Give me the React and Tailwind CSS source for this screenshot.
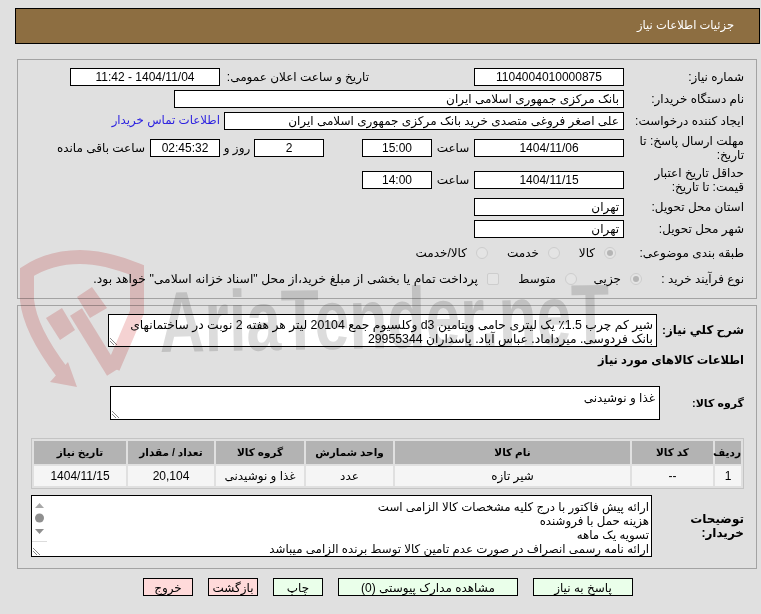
const box = 'h-[18px] border border-black bg-white px-1 flex items-center text-[12px] leading-none shrink-0'

function Field({ className, children }) {
  return <div className={`${box} ${className}`}>{children}</div>
}

function Grip() {
  return (
    <svg className="absolute left-0 bottom-0" width="10" height="10" viewBox="0 0 10 10">
      <path d="M1 2l7 7M1 5l4 4" stroke="#888" strokeWidth="1" fill="none" />
    </svg>
  )
}

function Radio({ checked }) {
  return (
    <span className="w-3 h-3 rounded-full bg-[#e4e4e4] border border-[#cdcdcd] flex items-center justify-center shrink-0">
      {checked && <span className="w-[6px] h-[6px] rounded-full bg-[#b5b5b5]" />}
    </span>
  )
}

function Option({ className, checked, children }) {
  return (
    <div className={`flex items-center gap-[9px] shrink-0 ${className}`}>
      <Radio checked={checked} />
      <span>{children}</span>
    </div>
  )
}

const columns = [
  { title: 'ردیف', value: '1', w: 'w-[26px]' },
  { title: 'کد کالا', value: '--', w: 'w-[81px]' },
  { title: 'نام کالا', value: 'شیر تازه', w: 'w-[235px]' },
  { title: 'واحد شمارش', value: 'عدد', w: 'w-[87px]' },
  { title: 'گروه کالا', value: 'غذا و نوشیدنی', w: 'w-[88px]' },
  { title: 'تعداد / مقدار', value: '20,104', w: 'w-[86px]' },
  { title: 'تاریخ نیاز', value: '1404/11/15', w: 'w-[92px]' },
]

function Watermark() {
  return (
    <svg dir="ltr" className="absolute inset-0 pointer-events-none mix-blend-multiply" width="761" height="614" viewBox="0 0 761 614">
      <g fill="none" stroke="#f5d2d2" strokeWidth="14">
        <path d="M113 368L137 312L137 270Q105 257 80 257Q50 257 27 272L27 300Q30 330 62 372" />
        <path d="M113 372L76 312" />
      </g>
      <g fill="#f5d2d2">
        <polygon points="46,318 62,308 75,330 60,340" />
        <polygon points="77,297 92,287 107,308 90,318" />
        <polygon points="50,382 77,387 68,362" />
      </g>
      <text
        x="160"
        y="352"
        fill="#dcdcdc"
        direction="ltr"
        fontFamily="Liberation Sans, sans-serif"
        fontWeight="700"
        fontSize="86"
        textLength="450"
        lengthAdjust="spacingAndGlyphs"
        transform="rotate(-1 160 352)"
      >
        AriaTender.neT
      </text>
    </svg>
  )
}

export default function App() {
  return (
    <div dir="rtl" className="relative w-[761px] h-[614px] overflow-hidden bg-[#e0e0e0] text-[12px] text-black font-['Liberation_Sans','DejaVu_Sans',sans-serif]">
      {/* Title bar */}
      <div className="mt-2 ml-[15px] mr-px h-[36px] border border-black bg-[#8d6e41] text-white text-[11.5px] flex items-center pr-[25px]">
        جزئیات اطلاعات نیاز
      </div>

      {/* Main info panel */}
      <div className="mt-[15px] ml-[17px] mr-1 h-[240px] border border-[#a3a3a3] pt-2 pr-3">
        <div className="flex items-center">
          <div className="w-[120px] shrink-0">شماره نیاز:</div>
          <Field className="w-[150px] justify-center">1104004010000875</Field>
          <div className="w-[254px] pr-[105px] shrink-0 whitespace-nowrap">تاریخ و ساعت اعلان عمومی:</div>
          <Field className="w-[150px] justify-center">1404/11/04 - 11:42</Field>
        </div>
        <div className="flex items-center mt-1">
          <div className="w-[120px] shrink-0">نام دستگاه خریدار:</div>
          <Field className="w-[450px]">بانک مرکزی جمهوری اسلامی ایران</Field>
        </div>
        <div className="flex items-center mt-1">
          <div className="w-[120px] shrink-0">ایجاد کننده درخواست:</div>
          <Field className="w-[400px]">علی اصغر فروغی متصدی خرید بانک مرکزی جمهوری اسلامی ایران</Field>
          <a className="mr-1 text-[#2a1fe0] text-[11.8px]" href="#">اطلاعات تماس خریدار</a>
        </div>
        <div className="flex items-center mt-[3px] h-[30px]">
          <div className="w-[120px] shrink-0 leading-[14px]">مهلت ارسال پاسخ: تا تاریخ:</div>
          <Field className="w-[150px] justify-center">1404/11/06</Field>
          <div className="w-[42px] text-center shrink-0">ساعت</div>
          <Field className="w-[70px] justify-center">15:00</Field>
          <div className="w-[38px] shrink-0" />
          <Field className="w-[70px] justify-center">2</Field>
          <div className="w-[34px] text-center shrink-0">روز و</div>
          <Field className="w-[70px] justify-center bg-[#eeeed6]">02:45:32</Field>
          <div className="mr-[5px]">ساعت باقی مانده</div>
        </div>
        <div className="flex items-center mt-[2px] h-[30px]">
          <div className="w-[120px] shrink-0 leading-[14px]">حداقل تاریخ اعتبار قیمت: تا تاریخ:</div>
          <Field className="w-[150px] justify-center">1404/11/15</Field>
          <div className="w-[42px] text-center shrink-0">ساعت</div>
          <Field className="w-[70px] justify-center">14:00</Field>
        </div>
        <div className="flex items-center mt-[3px]">
          <div className="w-[120px] shrink-0">استان محل تحویل:</div>
          <Field className="w-[150px]">تهران</Field>
        </div>
        <div className="flex items-center mt-1">
          <div className="w-[120px] shrink-0">شهر محل تحویل:</div>
          <Field className="w-[150px]">تهران</Field>
        </div>
        <div className="flex items-center mt-[6px] h-[18px]">
          <div className="w-[128px] shrink-0">طبقه بندی موضوعی:</div>
          <Option className="w-[56px]" checked>کالا</Option>
          <Option className="w-[72px]">خدمت</Option>
          <Option>کالا/خدمت</Option>
        </div>
        <div className="flex items-center mt-2 h-[18px]">
          <div className="w-[102px] shrink-0">نوع فرآیند خرید :</div>
          <Option className="w-[65px]" checked>جزیی</Option>
          <Option className="w-[78px]">متوسط</Option>
          <div className="flex items-center gap-[9px]">
            <span className="w-3 h-3 rounded-[2px] bg-[#e4e4e4] border border-[#cdcdcd] shrink-0" />
            <span className="whitespace-nowrap text-[12.35px]">پرداخت تمام یا بخشی از مبلغ خرید،از محل "اسناد خزانه اسلامی" خواهد بود.</span>
          </div>
        </div>
      </div>

      {/* Description, goods and buyer notes */}
      <div className="mt-[6px] ml-[17px] mr-1 h-[264px] border border-[#a3a3a3] pt-2 pr-3">
        <div className="flex items-center">
          <div className="w-[87px] shrink-0 font-bold text-[11.8px] whitespace-nowrap">شرح کلي نیاز:</div>
          <div className="relative w-[549px] h-[33px] border border-black bg-white px-[3px] pt-[3px] text-[12.3px] leading-[14px]">
            <div className="whitespace-nowrap">شیر کم چرب 1.5٪ یک لیتری حامی ویتامین d3 وکلسیوم جمع 20104 لیتر هر هفته 2 نوبت در ساختمانهای</div>
            <div className="whitespace-nowrap">بانک فردوسی. میرداماد. عباس آباد. پاسداران 29955344</div>
            <Grip />
          </div>
        </div>
        <div className="mt-[5px] h-4 font-bold text-[11.5px]">اطلاعات کالاهای مورد نیاز</div>
        <div className="flex items-center mt-[18px]">
          <div className="w-[84px] shrink-0 font-bold text-[11px]">گروه کالا:</div>
          <div className="relative w-[550px] h-[34px] border border-black bg-white px-1 pt-[2px]">
            غذا و نوشیدنی
            <Grip />
          </div>
        </div>
        <table className="mt-[18px] w-[713px] table-fixed border-separate border-spacing-[2px] border border-[#c4c4c4]">
          <thead>
            <tr>
              {columns.map((c) => (
                <th key={c.title} className={`${c.w} h-[23px] p-0 bg-[#b3b3b3] font-bold text-[10.5px] text-center`}>{c.title}</th>
              ))}
            </tr>
          </thead>
          <tbody>
            <tr>
              {columns.map((c) => (
                <td key={c.title} className="h-[20px] p-0 bg-[#f5f5f5] text-center">{c.value}</td>
              ))}
            </tr>
          </tbody>
        </table>
        <div className="flex items-center mt-[6px]">
          <div className="w-[92px] shrink-0 font-bold pl-6 leading-[14px]">توضیحات خریدار:</div>
          <div className="relative w-[621px] h-[62px] border border-black bg-white pr-[2px] pt-1 text-[11.8px] leading-[14px]">
            <div>ارائه پیش فاکتور با درج کلیه مشخصات کالا الزامی است</div>
            <div>هزینه حمل با فروشنده</div>
            <div>تسویه یک ماهه</div>
            <div>ارائه نامه رسمی انصراف در صورت عدم تامین کالا توسط برنده الزامی میباشد</div>
            {/* scrollbar of the readonly notes box */}
            <div className="absolute left-0 top-0 bottom-0 w-[15px] flex flex-col items-center">
              <svg width="15" height="45" viewBox="0 0 15 45">
                <path d="M3 12l4.500-5 4.500 5z" fill="#a8a8a8" />
                <circle cx="7.500" cy="22" r="4.500" fill="#8f8f8f" />
                <path d="M3 33l4.500 5 4.500-5z" fill="#8f8f8f" />
              </svg>
              <div className="w-full flex-1 border-t border-[#dcdcdc] relative">
                <Grip />
              </div>
            </div>
          </div>
        </div>
      </div>

      {/* Actions */}
      <div className="mt-[9px] flex pr-[128px] gap-[15px]">
        <button className="w-[100px] h-[18px] border border-black bg-[#eaffea]">پاسخ به نیاز</button>
        <button className="w-[180px] h-[18px] border border-black bg-[#eaffea]">مشاهده مدارک پیوستی (0)</button>
        <button className="w-[50px] h-[18px] border border-black bg-[#eaffea]">چاپ</button>
        <button className="w-[50px] h-[18px] border border-black bg-[#ffdada]">بازگشت</button>
        <button className="w-[50px] h-[18px] border border-black bg-[#ffdada]">خروج</button>
      </div>

      <Watermark />
    </div>
  )
}
